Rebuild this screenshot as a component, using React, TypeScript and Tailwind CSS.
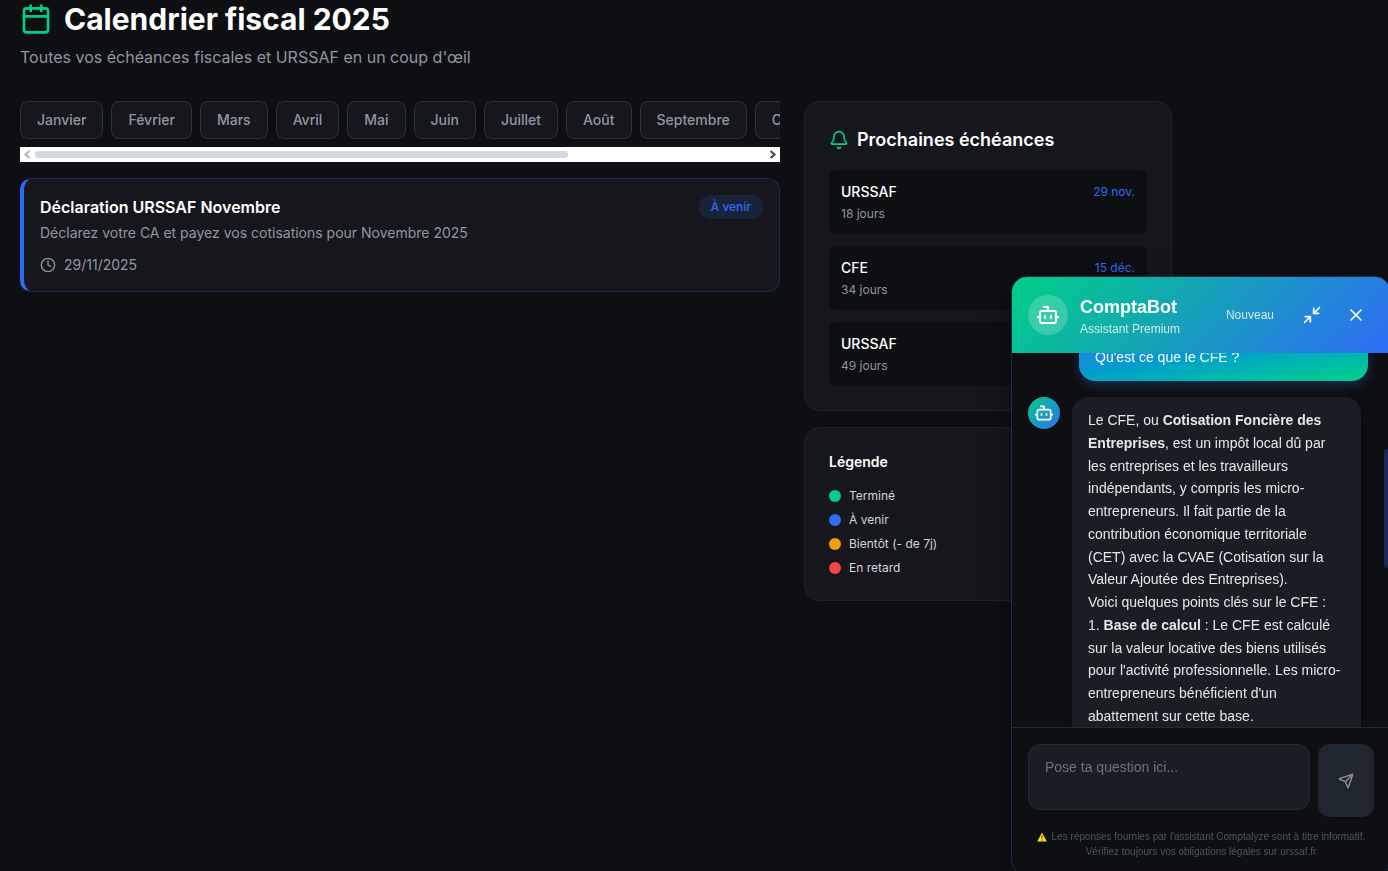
import { useLayoutEffect, useRef } from "react";
import { Bell, Bot, Calendar, Clock, Minimize2, Send, X } from "lucide-react";

const months = [
  "Janvier", "Février", "Mars", "Avril", "Mai", "Juin",
  "Juillet", "Août", "Septembre", "Octobre", "Novembre", "Décembre",
];

const deadlines = [
  { name: "URSSAF", date: "29 nov.", left: "18 jours" },
  { name: "CFE", date: "15 déc.", left: "34 jours" },
  { name: "URSSAF", date: "30 déc.", left: "49 jours" },
];

const legend = [
  { label: "Terminé", dot: "bg-[#00d084]" },
  { label: "À venir", dot: "bg-[#2e6cf6]" },
  { label: "Bientôt (- de 7j)", dot: "bg-[#f59e0b]" },
  { label: "En retard", dot: "bg-[#ef4444]" },
];

function MonthPicker() {
  return (
    <div className="mb-4">
      <div className="flex gap-2 overflow-x-auto pb-2 [scrollbar-width:none]">
        {months.map((m) => (
          <button
            key={m}
            type="button"
            className="shrink-0 rounded-lg border border-[#2d3139] bg-[#16171c] px-4 py-2 text-sm font-medium text-[#9096a3]"
          >
            {m}
          </button>
        ))}
      </div>
      <div className="flex h-[15px] items-center bg-white" aria-hidden="true">
        <svg className="h-[15px] w-[15px] shrink-0" viewBox="0 0 15 15" fill="none" stroke="#b5b5b5" strokeWidth="2.2">
          <path d="M9.5 4 L5.5 7.5 L9.5 11" />
        </svg>
        <div className="flex-1">
          <div className="h-[7px] w-[73%] rounded-[3px] bg-[#d1dae3]" />
        </div>
        <svg className="h-[15px] w-[15px] shrink-0" viewBox="0 0 15 15" fill="none" stroke="#505050" strokeWidth="2.2">
          <path d="M5.5 4 L9.5 7.5 L5.5 11" />
        </svg>
      </div>
    </div>
  );
}

function EventCard() {
  return (
    <article className="rounded-xl border border-l-4 border-[#1b2b55] border-l-[#2e6cf6] bg-[#16171c] p-4">
      <div className="flex items-start justify-between">
        <div>
          <h2 className="font-semibold text-white">Déclaration URSSAF Novembre</h2>
          <p className="mt-1 text-sm text-[#9096a3]">
            Déclarez votre CA et payez vos cotisations pour Novembre 2025
          </p>
        </div>
        <span className="rounded-full bg-[#182238] px-3 py-1 text-xs font-medium text-[#2e6cf6]">À venir</span>
      </div>
      <div className="mt-3 flex items-center gap-2 text-sm text-[#9096a3]">
        <Clock size={16} />
        <time>29/11/2025</time>
      </div>
    </article>
  );
}

function Sidebar() {
  return (
    <aside className="flex flex-col gap-4">
      <section className="rounded-2xl border border-[#1f2229] bg-[#16171c] p-6">
        <h2 className="mb-4 flex items-center gap-2 text-lg font-semibold text-white">
          <Bell size={20} className="text-[#00d084]" />
          Prochaines échéances
        </h2>
        <ul className="flex flex-col gap-3">
          {deadlines.map((d) => (
            <li key={d.date} className="rounded-lg bg-[#0e0f12] p-3">
              <div className="mb-1 flex items-center justify-between">
                <span className="text-sm font-medium text-white">{d.name}</span>
                <span className="text-xs text-[#2e6cf6]">{d.date}</span>
              </div>
              <p className="text-xs text-[#9096a3]">{d.left}</p>
            </li>
          ))}
        </ul>
      </section>
      <section className="rounded-2xl border border-[#1f2229] bg-[#16171c] p-6">
        <h3 className="mb-4 text-sm font-semibold text-white">Légende</h3>
        <ul className="flex flex-col gap-2">
          {legend.map((l) => (
            <li key={l.label} className="flex items-center gap-2 text-xs text-[#d1d5db]">
              <span className={`size-3 rounded-full ${l.dot}`} />
              {l.label}
            </li>
          ))}
        </ul>
      </section>
    </aside>
  );
}

function Messages() {
  const list = useRef<HTMLDivElement>(null);

  useLayoutEffect(() => {
    if (list.current) list.current.scrollTop = 35;
  }, []);

  return (
    <div className="relative flex min-h-0 flex-1">
      <div ref={list} className="min-w-0 flex-1 overflow-y-auto p-4 pr-[22px] [scrollbar-width:none]">
        <div className="flex flex-col gap-4 text-sm">
          <p className="w-[85%] self-end rounded-2xl bg-linear-to-br from-[#2e6cf6] to-[#00d084] px-4 py-3 leading-[23px] text-white shadow-[0_4px_12px_rgba(46,108,246,0.3)]">
            Qu'est ce que le CFE ?
          </p>
          <div className="flex items-start gap-3">
            <span className="flex size-8 shrink-0 items-center justify-center rounded-full bg-[linear-gradient(135deg,#00d084,#2e6cf6)] text-white">
              <Bot size={20} />
            </span>
            <div className="w-[85%] shrink-0 rounded-2xl bg-[#1b1d24] px-4 pt-3 pb-24 leading-relaxed text-[#e5e7eb] shadow-[0_2px_8px_rgba(0,0,0,0.3)]">
              <p>
                Le CFE, ou <strong>Cotisation Foncière des Entreprises</strong>, est un impôt local dû par les
                entreprises et les travailleurs indépendants, y compris les micro-entrepreneurs. Il fait partie de la
                contribution économique territoriale (CET) avec la CVAE (Cotisation sur la Valeur Ajoutée des
                Entreprises).
              </p>
              <p>Voici quelques points clés sur le CFE :</p>
              <p>
                1. <strong>Base de calcul</strong> : Le CFE est calculé sur la valeur locative des biens utilisés pour
                l'activité professionnelle. Les micro-entrepreneurs bénéficient d'un abattement sur cette base.
              </p>
            </div>
          </div>
        </div>
      </div>
      <div className="absolute top-24 right-0 h-[119px] w-[6px] rounded-[3px] bg-[#172a5a]" aria-hidden="true" />
    </div>
  );
}

function ChatPanel() {
  return (
    <section
      aria-label="ComptaBot"
      className="fixed -right-[3px] -bottom-[5px] flex h-[600px] w-[380px] flex-col overflow-hidden rounded-2xl border border-[#1b2b55] bg-[#0e0f12] font-['Liberation_Sans',Arial,sans-serif] shadow-[0_8px_32px_rgba(0,0,0,0.4)]"
    >
      <header className="flex items-center justify-between bg-[linear-gradient(135deg,#00d084,#2e6cf6)] p-4 text-white">
        <div className="flex items-center gap-3">
          <span className="flex size-10 items-center justify-center rounded-full bg-white/20">
            <Bot size={24} />
          </span>
          <div>
            <h2 className="text-lg font-semibold">ComptaBot</h2>
            <p className="text-xs text-white/80">Assistant Premium</p>
          </div>
        </div>
        <div className="flex items-center gap-2">
          <button type="button" className="px-3 py-2 text-xs text-white/80">Nouveau</button>
          <button type="button" aria-label="Réduire" className="p-2">
            <Minimize2 size={20} />
          </button>
          <button type="button" aria-label="Fermer" className="p-2">
            <X size={20} />
          </button>
        </div>
      </header>
      <Messages />
      <form className="border-t border-[#1f2937] p-4" onSubmit={(e) => e.preventDefault()}>
        <div className="flex gap-2">
          <div className="flex-1 pb-[7px]">
            <textarea
              aria-label="Question"
              rows={2}
              placeholder="Pose ta question ici..."
              className="block h-[66px] w-full resize-none rounded-xl border border-[#1f2a3c] bg-[#1b1d24] px-4 py-3 text-sm text-white placeholder:text-[#6b7280]"
            />
          </div>
          <button
            type="submit"
            aria-label="Envoyer"
            className="flex w-14 items-center justify-center rounded-xl bg-[#20262f] text-[#909296]"
          >
            <Send size={16} />
          </button>
        </div>
        <p className="mt-3 text-center text-[10px] leading-[15px] text-[#4b5563]">
          <svg className="mr-0.5 inline-block size-[10px]" viewBox="0 0 20 20" aria-hidden="true">
            <path d="M10 1 L19.5 19 H0.5 Z" fill="#fde018" />
            <path d="M10 7 V13 M10 15 V17" stroke="#4a4000" strokeWidth="2.4" />
          </svg>{" "}
          Les réponses fournies par l'assistant Comptalyze sont à titre informatif. Vérifiez toujours vos obligations
          légales sur urssaf.fr
        </p>
      </form>
    </section>
  );
}

export default function App() {
  return (
    <div className="min-h-screen bg-[#0e0f12] px-5 pt-px font-['Inter',sans-serif]">
      <main className="max-w-6xl">
        <header className="mb-8">
          <h1 className="mb-2 flex items-center gap-3 text-3xl font-bold text-white">
            <Calendar size={32} className="text-[#00d084]" />
            Calendrier fiscal 2025
          </h1>
          <p className="text-[#9096a3]">Toutes vos échéances fiscales et URSSAF en un coup d'œil</p>
        </header>
        <div className="grid grid-cols-3 items-start gap-6">
          <div className="col-span-2 min-w-0">
            <MonthPicker />
            <EventCard />
          </div>
          <Sidebar />
        </div>
      </main>
      <ChatPanel />
    </div>
  );
}
